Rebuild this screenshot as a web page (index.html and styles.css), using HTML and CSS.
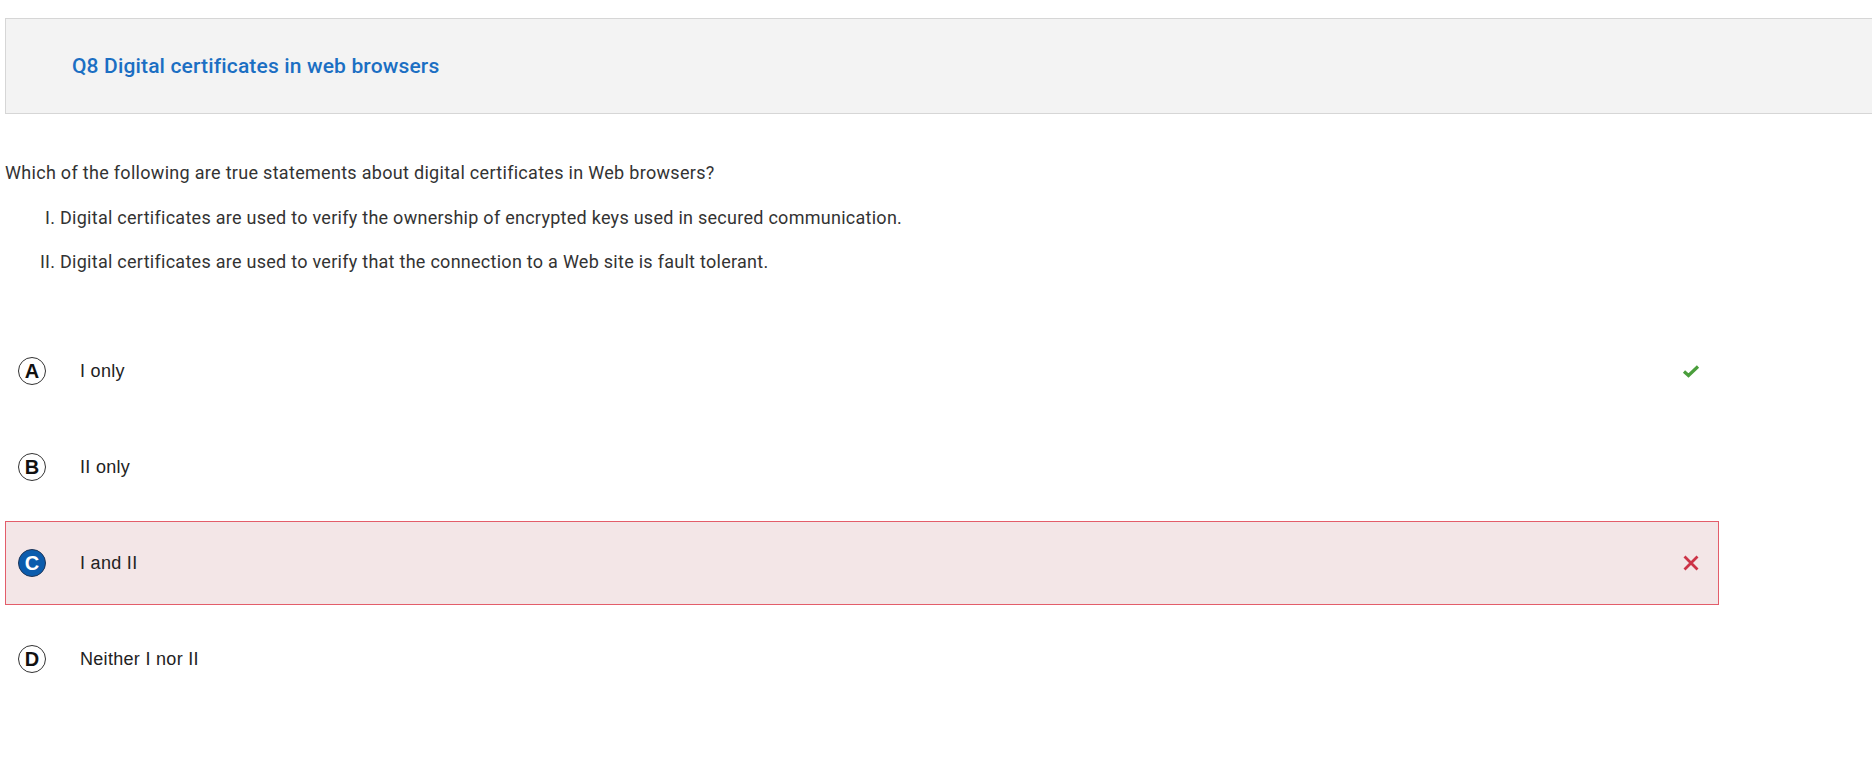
FILE: index.html
```html
<!DOCTYPE html>
<html lang="en">
<head>
<meta charset="utf-8">
<title>Q8 Digital certificates in web browsers</title>
<link rel="stylesheet" href="styles.css">
</head>
<body>
<div class="page">
  <header class="q-header">
    <h2 class="q-title">Q8 Digital certificates in web browsers</h2>
  </header>
  <div class="q-body">
    <p class="q-text">Which of the following are true statements about digital certificates in Web browsers?</p>
    <ol class="q-list" type="I">
      <li>Digital certificates are used to verify the ownership of encrypted keys used in secured communication.</li>
      <li>Digital certificates are used to verify that the connection to a Web site is fault tolerant.</li>
    </ol>
  </div>
  <div class="options">
    <div class="option">
      <span class="badge">A</span>
      <span class="opt-text">I only</span>
      <svg class="mark" width="18" height="14" viewBox="0 0 18 14"><path d="M2 7.5 L6.5 11.5 L16 2.5" fill="none" stroke="#4a9e3c" stroke-width="3.2"/></svg>
    </div>
    <div class="option">
      <span class="badge">B</span>
      <span class="opt-text">II only</span>
    </div>
    <div class="option wrong">
      <span class="badge selected">C</span>
      <span class="opt-text">I and II</span>
      <svg class="mark" width="18" height="16" viewBox="0 0 18 16"><path d="M2.5 1.5 L15.5 14.5 M15.5 1.5 L2.5 14.5" fill="none" stroke="#cc3347" stroke-width="2.8"/></svg>
    </div>
    <div class="option">
      <span class="badge">D</span>
      <span class="opt-text">Neither I nor II</span>
    </div>
  </div>
</div>
</body>
</html>
```

FILE: styles.css
```css
html, body {
  margin: 0;
  padding: 0;
  background: #ffffff;
  overflow: hidden;
}

.page {
  padding: 18px 0 0 5px;
  font-family: Roboto, "Liberation Sans", sans-serif;
  color: #333333;
}

.q-header {
  height: 94px;
  background: #f3f3f3;
  border: 1px solid #d6d6d6;
  border-right: none;
  display: flex;
  align-items: center;
  padding-left: 66px;
  margin-right: -20px;
}

.q-title {
  margin: 0;
  font-family: Roboto, sans-serif;
  font-weight: 500;
  font-size: 21px;
  letter-spacing: 0.15px;
  color: #1b6fc3;
}

.q-body {
  padding-top: 45px;
  font-size: 18px;
  line-height: 27px;
  letter-spacing: 0.3px;
}

.q-text {
  margin: 0 0 18px 0;
}

.q-list {
  margin: 0;
  padding-left: 55px;
  letter-spacing: 0.27px;
}

.q-list li {
  margin-bottom: 17px;
}

.options {
  padding-top: 37px;
  width: 1714px;
  display: flex;
  flex-direction: column;
  gap: 12px;
}

.option {
  height: 82px;
  border: 1px solid transparent;
  display: flex;
  align-items: center;
  padding: 0 18px 0 12px;
  font-family: "Liberation Sans", Arial, sans-serif;
  font-size: 18px;
  letter-spacing: 0.3px;
  color: #222222;
}

.option.wrong {
  background: #f3e6e7;
  border-color: #e35d6a;
}

.badge {
  width: 26px;
  height: 26px;
  border: 1px solid #333333;
  border-radius: 50%;
  display: flex;
  align-items: center;
  justify-content: center;
  font-family: "Liberation Sans", Arial, sans-serif;
  font-weight: bold;
  font-size: 20px;
  letter-spacing: 0;
  color: #111111;
  flex: none;
}

.badge.selected {
  background: #0b5cad;
  border-color: #1d3558;
  color: #ffffff;
}

.opt-text {
  margin-left: 34px;
  flex: 1;
}

.mark {
  flex: none;
}
```
